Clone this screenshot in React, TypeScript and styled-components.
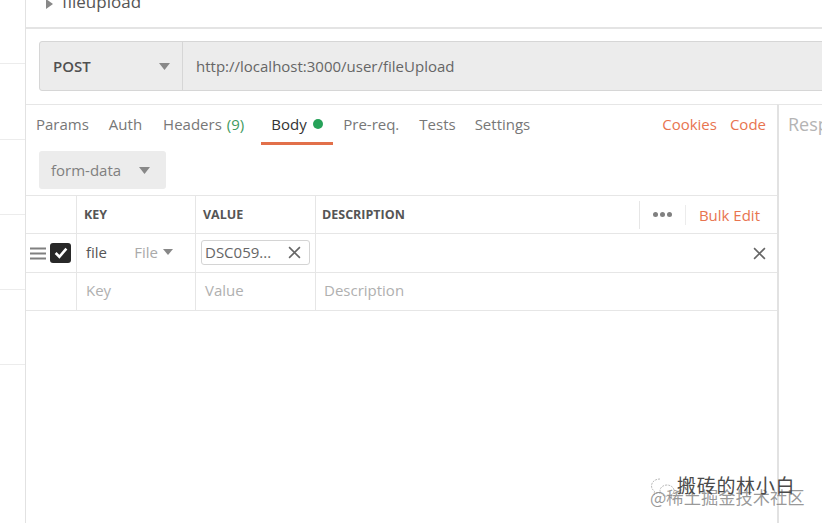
import React from "react";
import styled, { createGlobalStyle } from "styled-components";

const Global = createGlobalStyle`
  html, body { margin: 0; padding: 0; background: #fff; }
  body { font-family: "Open Sans", "Liberation Sans", sans-serif; overflow: hidden; }
  #root { width: 822px; height: 523px; }
`;

const Page = styled.div`
  position: relative;
  width: 822px;
  height: 523px;
  display: flex;
  overflow: hidden;
  background: #fff;
`;

const Sidebar = styled.aside`
  width: 25px;
  flex: none;
  box-sizing: content-box;
  border-right: 1.5px solid #e2e2e2;
  padding-top: 63px;
`;

const SideRow = styled.div`
  height: 74px;
  border-top: 1px solid #ececec;
  &:first-child {
    height: 75px;
  }
`;

const Main = styled.main`
  flex: 1;
  min-width: 0;
  display: flex;
  flex-direction: column;
`;

const CollectionStrip = styled.div`
  height: 27px;
  flex: none;
  border-bottom: 2px solid #e4e4e4;
  padding-left: 20px;
  display: flex;
  align-items: flex-start;
  gap: 9px;
  overflow: hidden;
`;

const Caret = styled.svg`
  flex: none;
  margin-top: -1px;
`;

const CollectionName = styled.span`
  font-size: 17px;
  line-height: 20px;
  color: #555;
  margin-top: -8px;
`;

const UrlSection = styled.div`
  height: 75px;
  flex: none;
  box-sizing: border-box;
  padding: 12px 0 0 13px;
`;

const UrlBar = styled.div`
  height: 50px;
  width: 830px;
  box-sizing: border-box;
  display: flex;
  background: #ececec;
  border: 1px solid #d6d6d6;
  border-radius: 3px;
`;

const MethodBox = styled.div`
  width: 143px;
  flex: none;
  box-sizing: border-box;
  padding: 0 12px 0 13px;
  border-right: 1px solid #d6d6d6;
  display: flex;
  align-items: center;
  justify-content: space-between;
  font-size: 15px;
  font-weight: 600;
  color: #505050;
`;

const UrlText = styled.div`
  padding-left: 13px;
  display: flex;
  align-items: center;
  font-size: 15px;
  color: #666;
`;

const Split = styled.div`
  flex: 1;
  display: flex;
  min-height: 0;
`;

const RequestPane = styled.section`
  width: 751px;
  flex: none;
  border-top: 1px solid #e6e6e6;
`;

const ResponsePane = styled.section`
  flex: 1;
  border-left: 2px solid #e2e2e2;
  border-top: 1px solid #e6e6e6;
  padding: 7px 0 0 9px;
  font-size: 18px;
  line-height: 24px;
  color: #b4b4b4;
  overflow: hidden;
  white-space: nowrap;
`;

const TabRow = styled.div`
  height: 40px;
  display: flex;
  padding: 0 11px 0 10px;
`;

const Tab = styled.div<{ $active?: boolean; $ml: number }>`
  height: 40px;
  box-sizing: border-box;
  margin-left: ${(p) => p.$ml}px;
  padding-top: 9px;
  font-size: 15px;
  line-height: 20px;
  color: ${(p) => (p.$active ? "#333" : "#777")};
  white-space: nowrap;
  display: flex;
  align-items: flex-start;
`;

const BodyTab = styled(Tab)`
  width: 72px;
  padding-left: 10px;
  gap: 6px;
  border-bottom: 3px solid #e2704a;
`;

const Count = styled.span`
  color: #3f9a60;
  margin-left: 5px;
`;

const Dot = styled.span`
  width: 10px;
  height: 10px;
  margin-top: 5px;
  border-radius: 50%;
  background: #26a259;
`;

const Spacer = styled.div`
  flex: 1;
`;

const LinkTab = styled.div<{ $ml?: number }>`
  margin-left: ${(p) => p.$ml ?? 0}px;
  padding-top: 9px;
  font-size: 15px;
  line-height: 20px;
  color: #e8744f;
`;

const ModeRow = styled.div`
  height: 50px;
  box-sizing: border-box;
  padding: 6px 0 0 13px;
`;

const ModeSelect = styled.div`
  width: 127px;
  height: 38px;
  box-sizing: border-box;
  padding: 0 16px 0 12px;
  background: #ececec;
  border-radius: 3px;
  display: flex;
  align-items: center;
  justify-content: space-between;
  font-size: 15px;
  color: #808080;
`;

const Row = styled.div<{ $h: number }>`
  height: ${(p) => p.$h}px;
  box-sizing: border-box;
  display: grid;
  grid-template-columns: 50px 119px 120px 1fr;
  border-top: 1px solid #e6e6e6;
`;

const LastLine = styled.div`
  border-top: 1px solid #e6e6e6;
`;

const Cell = styled.div<{ $pb?: number }>`
  min-width: 0;
  box-sizing: border-box;
  padding: 0 6px ${(p) => p.$pb ?? 0}px;
  display: flex;
  align-items: center;
  border-left: 1px solid #e6e6e6;
  font-size: 15px;
  color: #555;
`;

const HandleCell = styled.div`
  display: flex;
  align-items: center;
  padding-left: 4px;
  gap: 4px;
`;

const HeadLabel = styled.span<{ $ml?: number }>`
  margin-left: ${(p) => p.$ml ?? 0}px;
  font-size: 12.5px;
  font-weight: 700;
  color: #555;
`;

const HeadTools = styled.div`
  margin-left: auto;
  height: 28px;
  display: flex;
  align-items: center;
  border-left: 1px solid #e6e6e6;
  margin-right: 11px;
`;

const MoreDots = styled.div`
  width: 45px;
  height: 20px;
  display: flex;
  align-items: center;
  justify-content: center;
  gap: 1.5px;
  border-right: 1px solid #ececec;
`;

const MoreDot = styled.span`
  width: 5.5px;
  height: 5.5px;
  border-radius: 50%;
  background: #808080;
`;

const BulkEdit = styled.span`
  margin-left: 13px;
  font-size: 15px;
  color: #e8744f;
`;

const CheckBox = styled.div`
  width: 21px;
  height: 20px;
  border-radius: 3px;
  background: #282828;
  display: flex;
  align-items: center;
  justify-content: center;
`;

const KeyCell = styled(Cell)`
  padding-left: 9px;
`;

const FileType = styled.span`
  margin-left: auto;
  margin-right: 16px;
  display: flex;
  align-items: center;
  gap: 5px;
  color: #aaa;
`;

const FileChip = styled.div`
  flex: none;
  width: 109px;
  height: 25px;
  margin-left: -1px;
  box-sizing: border-box;
  padding: 0 8px 0 3px;
  display: flex;
  align-items: center;
  justify-content: space-between;
  border: 1px solid #d4d4d4;
  border-radius: 3px;
  color: #666;
`;

const DescCell = styled(Cell)`
  justify-content: flex-end;
  padding-right: 11px;
`;

const Placeholder = styled.span<{ $pl?: number }>`
  padding-left: ${(p) => p.$pl ?? 0}px;
  color: #b0b0b0;
`;

const Watermark = styled.div`
  position: absolute;
  left: 650px;
  top: 472px;
  width: 172px;
  height: 40px;
  pointer-events: none;
`;

const WechatName = styled.span`
  position: absolute;
  left: 27px;
  top: 1px;
  font-family: "Noto Sans CJK SC", sans-serif;
  font-size: 19px;
  line-height: 24px;
  letter-spacing: 0.7px;
  color: #4a4a4a;
  white-space: nowrap;
`;

const JuejinName = styled.span`
  position: absolute;
  left: 0;
  top: 13px;
  font-family: "Noto Sans CJK SC", sans-serif;
  font-size: 17.3px;
  line-height: 24px;
  color: rgba(120, 120, 120, 0.75);
  white-space: nowrap;
`;

const WechatLogo = styled.svg`
  position: absolute;
  left: 0;
  top: 4px;
`;

const Arrow = ({ w = 12, h = 7, c = "#888" }: { w?: number; h?: number; c?: string }) => (
  <svg width={w} height={h} viewBox="0 0 12 7" preserveAspectRatio="none">
    <path d="M0 0h12L6 7z" fill={c} />
  </svg>
);

const Cross = ({ s = 13, c = "#666" }: { s?: number; c?: string }) => (
  <svg width={s} height={s} viewBox="0 0 12 12">
    <path d="M1 1l10 10M11 1L1 11" stroke={c} strokeWidth="1.5" fill="none" />
  </svg>
);

export default function App() {
  return (
    <Page>
      <Global />
      <Sidebar>
        <SideRow />
        <SideRow />
        <SideRow />
        <SideRow />
        <SideRow />
      </Sidebar>
      <Main>
        <CollectionStrip>
          <Caret width="7" height="10" viewBox="0 0 7 10">
            <path d="M0 0l7 5-7 5z" fill="#888" />
          </Caret>
          <CollectionName>fileupload</CollectionName>
        </CollectionStrip>
        <UrlSection>
          <UrlBar>
            <MethodBox>
              POST
              <Arrow w={11} h={7} />
            </MethodBox>
            <UrlText>http://localhost:3000/user/fileUpload</UrlText>
          </UrlBar>
        </UrlSection>
        <Split>
          <RequestPane>
            <TabRow>
              <Tab $ml={0}>Params</Tab>
              <Tab $ml={20}>Auth</Tab>
              <Tab $ml={21}>
                Headers<Count>(9)</Count>
              </Tab>
              <BodyTab $ml={17} $active>
                Body
                <Dot />
              </BodyTab>
              <Tab $ml={10}>Pre-req.</Tab>
              <Tab $ml={20}>Tests</Tab>
              <Tab $ml={19}>Settings</Tab>
              <Spacer />
              <LinkTab>Cookies</LinkTab>
              <LinkTab $ml={13}>Code</LinkTab>
            </TabRow>
            <ModeRow>
              <ModeSelect>
                form-data
                <Arrow w={11} h={7} />
              </ModeSelect>
            </ModeRow>
            <Row $h={38}>
              <div />
              <Cell>
                <HeadLabel $ml={1}>KEY</HeadLabel>
              </Cell>
              <Cell>
                <HeadLabel $ml={1}>VALUE</HeadLabel>
              </Cell>
              <Cell>
                <HeadLabel>DESCRIPTION</HeadLabel>
                <HeadTools>
                  <MoreDots>
                    <MoreDot />
                    <MoreDot />
                    <MoreDot />
                  </MoreDots>
                  <BulkEdit>Bulk Edit</BulkEdit>
                </HeadTools>
              </Cell>
            </Row>
            <Row $h={39}>
              <HandleCell>
                <svg width="16" height="13" viewBox="0 0 16 13">
                  <path d="M0 1.500h16M0 6.500h16M0 11.500h16" stroke="#808080" strokeWidth="2" />
                </svg>
                <CheckBox>
                  <svg width="14" height="12" viewBox="0 0 13 11">
                    <path d="M1.500 5.500l3.500 3.500 6.500-7.500" stroke="#fff" strokeWidth="2.4" fill="none" />
                  </svg>
                </CheckBox>
              </HandleCell>
              <KeyCell $pb={2}>
                file
                <FileType>
                  File
                  <Arrow w={10} h={6} />
                </FileType>
              </KeyCell>
              <Cell $pb={2}>
                <FileChip>
                  DSC059...
                  <Cross />
                </FileChip>
              </Cell>
              <DescCell>
                <Cross />
              </DescCell>
            </Row>
            <Row $h={38}>
              <div />
              <KeyCell $pb={3}>
                <Placeholder>Key</Placeholder>
              </KeyCell>
              <Cell $pb={3}>
                <Placeholder $pl={3}>Value</Placeholder>
              </Cell>
              <Cell $pb={3}>
                <Placeholder $pl={2}>Description</Placeholder>
              </Cell>
            </Row>
            <LastLine />
          </RequestPane>
          <ResponsePane>Response</ResponsePane>
        </Split>
      </Main>
      <Watermark>
        <WechatLogo width="26" height="24" viewBox="0 0 26 24">
          <path
            d="M10 3C5 3 1.500 6 1.500 10c0 2.300 1.200 4 3 5.300L4 18.500l3.200-1.700c1 .3 2 .4 3 .4"
            stroke="#bbb"
            strokeWidth="1"
            strokeDasharray="2 1"
            fill="none"
          />
          <path
            d="M17 9c-3.800 0-7 2.500-7 5.600s3.200 5.600 7 5.600c.8 0 1.600-.1 2.300-.3l2.500 1.300-.5-2.400c1.600-1 2.700-2.600 2.700-4.200C24 11.500 20.800 9 17 9z"
            stroke="#bbb"
            strokeWidth="1"
            strokeDasharray="2 1"
            fill="none"
          />
        </WechatLogo>
        <JuejinName>@稀土掘金技术社区</JuejinName>
        <WechatName>搬砖的林小白</WechatName>
      </Watermark>
    </Page>
  );
}
